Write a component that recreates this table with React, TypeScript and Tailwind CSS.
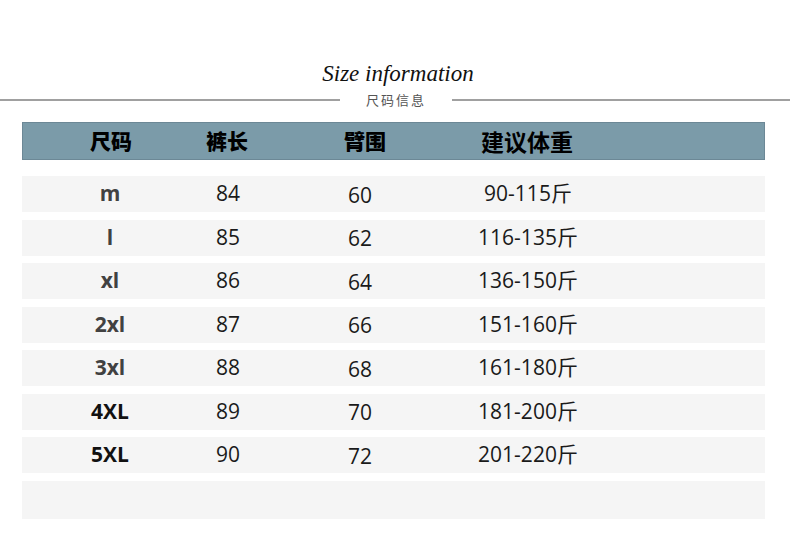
import React from "react";

const rows = [
  { s: "m", a: "84", b: "60", c: "90-115斤", dark: false },
  { s: "l", a: "85", b: "62", c: "116-135斤", dark: false },
  { s: "xl", a: "86", b: "64", c: "136-150斤", dark: false },
  { s: "2xl", a: "87", b: "66", c: "151-160斤", dark: false },
  { s: "3xl", a: "88", b: "68", c: "161-180斤", dark: false },
  { s: "4XL", a: "89", b: "70", c: "181-200斤", dark: true },
  { s: "5XL", a: "90", b: "72", c: "201-220斤", dark: true },
];

export default function App() {
  return (
    <div
      className="w-[790px] h-[549px] bg-white overflow-hidden flex flex-col"
      style={{ fontFamily: '"Open Sans", "Noto Sans CJK SC", sans-serif' }}
    >
      <div className="h-[60px] shrink-0" />
      <div className="h-[26px] flex items-center justify-center">
        <span
          className="text-[23px] italic text-[#111] leading-none pl-[6px]"
          style={{ fontFamily: '"Liberation Serif", serif' }}
        >
          Size information
        </span>
      </div>
      <div className="h-[28px] flex items-center">
        <div className="w-[340px] h-[2px] bg-[#a0a0a0]" />
        <div
          className="w-[112px] flex justify-center text-[13px] text-[#555] tracking-[2px]"
          style={{ fontFamily: '"Noto Sans CJK SC", sans-serif' }}
        >
          尺码信息
        </div>
        <div className="flex-1 h-[2px] bg-[#a0a0a0]" />
      </div>
      <div className="ml-[22px] w-[743px] mt-[8px] flex flex-col">
        <div
          className="h-[38px] bg-[#7b9ba9] border border-[#6c8896] flex items-center text-black"
          style={{ fontFamily: '"Noto Sans CJK SC", sans-serif' }}
        >
          <div className="w-[176px] text-center text-[21px] font-black">尺码</div>
          <div className="w-[56px] text-center text-[21px] font-black">裤长</div>
          <div className="w-[220px] text-center text-[21px] font-black">臂围</div>
          <div className="w-[104px] text-center text-[23px] font-bold">建议体重</div>
        </div>
        <div className="mt-[16px] flex flex-col gap-[7.5px]">
          {rows.map((r) => (
            <div key={r.s} className="h-[36px] bg-[#f5f5f5] flex items-center text-[21px] text-[#1a1a1a]">
              <div
                className={
                  "w-[176px] text-center font-bold " + (r.dark ? "text-[#111]" : "text-[#414141]")
                }
              >
                {r.s}
              </div>
              <div className="w-[60px] text-center">{r.a}</div>
              <div className="w-[204px] text-center pt-[3px]">{r.b}</div>
              <div className="w-[132px] text-center">{r.c}</div>
            </div>
          ))}
          <div className="h-[38px] bg-[#f5f5f5]" />
        </div>
      </div>
    </div>
  );
}
